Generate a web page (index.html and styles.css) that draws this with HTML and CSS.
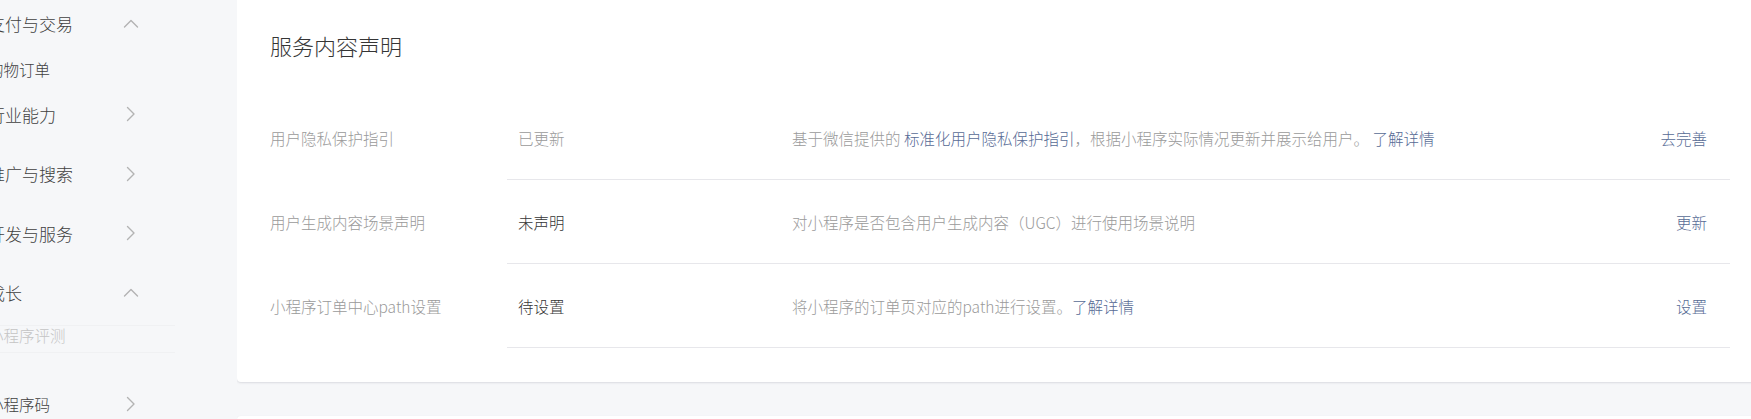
FILE: index.html
```html
<!DOCTYPE html>
<html lang="zh-CN">
<head>
<meta charset="utf-8">
<title>服务内容声明</title>
<link rel="stylesheet" href="styles.css">
</head>
<body>
<div class="page">
  <aside class="sidebar">
    <ul class="nav">
      <li class="nav-head"><span>支付与交易</span>
        <svg class="chev" viewBox="0 0 16 16"><path d="M1.5 11 L8 4.5 L14.5 11"/></svg>
      </li>
      <li class="nav-sub"><span>购物订单</span></li>
      <li class="nav-head"><span>行业能力</span>
        <svg class="chev" viewBox="0 0 16 16"><path d="M4.5 1.5 L11 8 L4.5 14.5"/></svg>
      </li>
      <li class="nav-head"><span>推广与搜索</span>
        <svg class="chev" viewBox="0 0 16 16"><path d="M4.5 1.5 L11 8 L4.5 14.5"/></svg>
      </li>
      <li class="nav-head"><span>开发与服务</span>
        <svg class="chev" viewBox="0 0 16 16"><path d="M4.5 1.5 L11 8 L4.5 14.5"/></svg>
      </li>
      <li class="nav-head"><span>成长</span>
        <svg class="chev" viewBox="0 0 16 16"><path d="M1.5 11 L8 4.5 L14.5 11"/></svg>
      </li>
      <li class="nav-sub nav-sub-disabled"><span>小程序评测</span></li>
      <li class="nav-head nav-head-small"><span>小程序码</span>
        <svg class="chev" viewBox="0 0 16 16"><path d="M4.5 1.5 L11 8 L4.5 14.5"/></svg>
      </li>
    </ul>
  </aside>
  <main class="main">
    <section class="card">
      <h2 class="card-title">服务内容声明</h2>
      <div class="rows">
        <div class="row">
          <div class="row-label">用户隐私保护指引</div>
          <div class="row-body">
            <div class="row-status status-muted">已更新</div>
            <div class="row-desc">基于微信提供的 <a class="link">标准化用户隐私保护指引</a>，根据小程序实际情况更新并展示给用户。 <a class="link">了解详情</a></div>
            <a class="row-action">去完善</a>
          </div>
        </div>
        <div class="row">
          <div class="row-label">用户生成内容场景声明</div>
          <div class="row-body">
            <div class="row-status">未声明</div>
            <div class="row-desc">对小程序是否包含用户生成内容（UGC）进行使用场景说明</div>
            <a class="row-action">更新</a>
          </div>
        </div>
        <div class="row">
          <div class="row-label">小程序订单中心path设置</div>
          <div class="row-body">
            <div class="row-status">待设置</div>
            <div class="row-desc">将小程序的订单页对应的path进行设置。<a class="link">了解详情</a></div>
            <a class="row-action">设置</a>
          </div>
        </div>
      </div>
    </section>
    <section class="card card-next"></section>
  </main>
</div>
</body>
</html>
```

FILE: styles.css
```css
html, body {
  margin: 0;
  padding: 0;
  background: #f6f7f9;
  overflow: hidden;
}

body {
  font-family: "Noto Sans CJK SC", "Noto Sans", sans-serif;
  font-weight: 300;
  color: #353535;
  width: 1751px;
  height: 419px;
}

.page {
  display: flex;
  height: 419px;
  overflow: hidden;
}

.sidebar {
  width: 237px;
  flex: 0 0 237px;
  overflow: hidden;
}

.nav {
  list-style: none;
  margin: -6px 0 0 -12px;
  padding: 0;
  width: 187px;
}

.nav-head {
  display: flex;
  align-items: center;
  height: 59.5px;
  padding-right: 36px;
  font-size: 17px;
  color: #404040;
  white-space: nowrap;
}

.nav-head span {
  flex: 1;
}

.nav-head-small {
  font-size: 15.5px;
  margin-top: 21px;
  height: 59px;
}

.chev {
  width: 16px;
  height: 16px;
  flex: 0 0 16px;
  fill: none;
  stroke: #b3b3b3;
  stroke-width: 1.4;
  stroke-linecap: round;
  stroke-linejoin: round;
}

.nav-sub {
  display: flex;
  align-items: center;
  height: 31px;
  font-size: 15.5px;
  color: #404040;
  white-space: nowrap;
}

.nav-sub-disabled {
  color: #c4c4c4;
  height: 28px;
  box-sizing: border-box;
  padding-bottom: 8px;
  margin-top: 2.5px;
  border-top: 1px solid #f0f1f3;
  border-bottom: 1px solid #f0f1f3;
}

.main {
  flex: 1;
  min-width: 0;
  overflow: hidden;
}

.card {
  background: #fff;
  border-radius: 4px;
  margin-top: -20px;
  margin-right: -20px;
  padding: 50px 41px 34px 33px;
  box-shadow: 0 1px 2px 0 rgba(140, 140, 150, 0.25);
}

.card-next {
  margin-top: 34px;
  height: 200px;
  padding: 0;
}

.card-title {
  margin: 0;
  font-size: 22px;
  font-weight: 300;
  line-height: 30px;
  color: #353535;
}

.rows {
  margin-top: 36px;
}

.row {
  display: flex;
  align-items: stretch;
  height: 84px;
  font-size: 15.5px;
}

.row-label {
  width: 237px;
  flex: 0 0 237px;
  display: flex;
  align-items: center;
  color: #9a9a9a;
  white-space: nowrap;
}

.row-body {
  flex: 1;
  display: flex;
  align-items: center;
  border-bottom: 1px solid #e7e7eb;
  padding: 0 23px 0 11px;
}

.row-status {
  width: 274px;
  flex: 0 0 274px;
  color: #353535;
}

.status-muted {
  color: #9a9a9a;
}

.row-desc {
  flex: 1;
  color: #9a9a9a;
  white-space: pre;
}

.link {
  color: #576b95;
  text-decoration: none;
}

.row-action {
  color: #576b95;
  text-decoration: none;
  white-space: nowrap;
}
```
